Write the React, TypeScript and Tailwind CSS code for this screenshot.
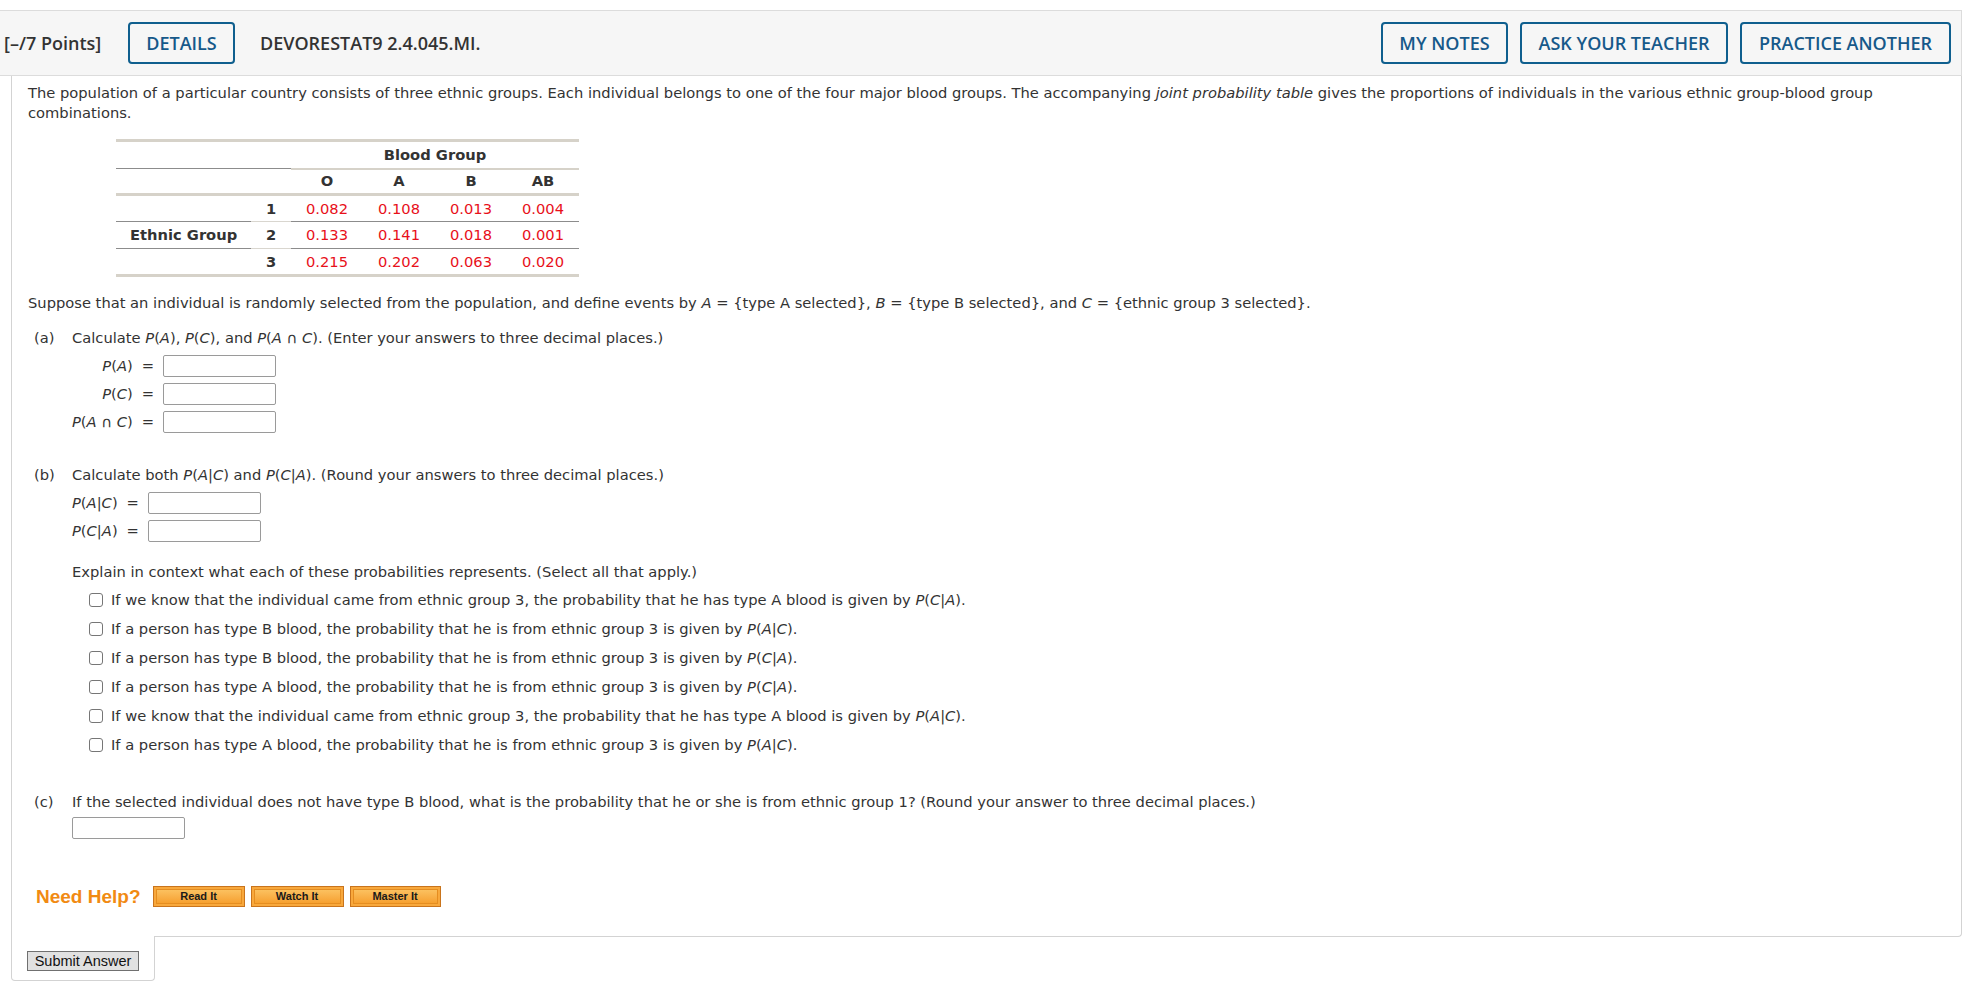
const body = { fontFamily: '"DejaVu Sans", Verdana, sans-serif' }
const head = { fontFamily: '"Open Sans", Arial, sans-serif' }
const arial = { fontFamily: '"Liberation Sans", Arial, sans-serif' }

const rows = [
  ['1', '0.082', '0.108', '0.013', '0.004'],
  ['2', '0.133', '0.141', '0.018', '0.001'],
  ['3', '0.215', '0.202', '0.063', '0.020'],
]

const choices = [
  ['If we know that the individual came from ethnic group 3, the probability that he has type A blood is given by ', 'C', 'A'],
  ['If a person has type B blood, the probability that he is from ethnic group 3 is given by ', 'A', 'C'],
  ['If a person has type B blood, the probability that he is from ethnic group 3 is given by ', 'C', 'A'],
  ['If a person has type A blood, the probability that he is from ethnic group 3 is given by ', 'C', 'A'],
  ['If we know that the individual came from ethnic group 3, the probability that he has type A blood is given by ', 'A', 'C'],
  ['If a person has type A blood, the probability that he is from ethnic group 3 is given by ', 'A', 'C'],
]

const Cond = ({ a, b }: { a: string; b: string }) => (
  <span>
    <i>P</i>(<i>{a}</i>|<i>{b}</i>)
  </span>
)

const Box = ({ w = 'w-[113px]' }: { w?: string }) => (
  <span className={`inline-block ${w} h-[22px] border border-[#9a9a9a] rounded-[2px] bg-white align-middle`} />
)

const HeadBtn = ({ label, w }: { label: string; w: string }) => (
  <div
    className={`${w} h-[42px] flex items-center justify-center border-2 border-[#0f5f8e] rounded-[4px] text-[18px] font-semibold text-[#16598a]`}
  >
    {label}
  </div>
)

const HelpBtn = ({ label, w }: { label: string; w: string }) => (
  <div
    className={`${w} h-[21px] border border-[#c9741c] bg-[#f8a83c] p-[2px]`}
    style={arial}
  >
    <div className="h-full border border-[#e58d20] bg-gradient-to-b from-[#fbc15f] to-[#f6a02e] flex items-center justify-center text-[11px] font-bold text-[#1a1a1a] leading-none">
      {label}
    </div>
  </div>
)

export default function App() {
  return (
    <div className="bg-white w-[1971px] min-h-[987px] text-[#333]" style={body}>
      <div className="h-[10px]" />
      {/* header bar */}
      <div
        className="w-[1962px] h-[66px] bg-[#f6f6f6] border-t border-b border-r border-[#dcdcdc] flex items-center pl-[4px] pr-[10px]"
        style={head}
      >
        <div className="text-[18px] font-semibold text-[#333] w-[124px]">[–/7 Points]</div>
        <HeadBtn label="DETAILS" w="w-[107px]" />
        <div className="ml-[25px] text-[18px] font-semibold text-[#333]">DEVORESTAT9 2.4.045.MI.</div>
        <div className="ml-auto flex gap-[12px]">
          <HeadBtn label="MY NOTES" w="w-[127px]" />
          <HeadBtn label="ASK YOUR TEACHER" w="w-[208px]" />
          <HeadBtn label="PRACTICE ANOTHER" w="w-[211px]" />
        </div>
      </div>

      {/* question body */}
      <div className="ml-[11px] w-[1951px]">
        <div className="border-l border-r border-b border-[#d3d3d3] rounded-br-[4px] pl-[16px] pr-[40px] pt-[7px] pb-[29px] text-[14.7px] leading-[20px]">
          <p>
            The population of a particular country consists of three ethnic groups. Each individual belongs to one of
            the four major blood groups. The accompanying <i>joint probability table</i> gives the proportions of
            individuals in the various ethnic group-blood group combinations.
          </p>

          <table className="mt-[16px] ml-[88px] border-collapse">
            <tbody>
              <tr className="h-[28px] border-t-[3px] border-[#d6d2c9]">
                <td colSpan={2} className="w-[175px] border-b border-[#8c8c8c]" />
                <td colSpan={4} className="text-center font-bold border-b-2 border-[#d6d2c9]">
                  Blood Group
                </td>
              </tr>
              <tr className="h-[26px] border-b-[3px] border-[#d6d2c9] font-bold">
                <td colSpan={2} />
                <td className="w-[72px] text-center">O</td>
                <td className="w-[72px] text-center">A</td>
                <td className="w-[72px] text-center">B</td>
                <td className="w-[72px] text-center">AB</td>
              </tr>
              {rows.map((r, i) => (
                <tr key={i} className={`h-[27px] ${i < 2 ? 'border-b border-[#8c8c8c]' : 'border-b-[3px] border-[#d6d2c9]'}`}>
                  <td className="w-[135px] pl-[14px] font-bold">{i === 1 ? 'Ethnic Group' : ''}</td>
                  <td className={`w-[40px] text-center font-bold ${i < 2 ? 'border-b border-[#d9d6cf]' : ''}`}>{r[0]}</td>
                  {r.slice(1).map((v, j) => (
                    <td key={j} className="text-center text-[#e8101a]">
                      {v}
                    </td>
                  ))}
                </tr>
              ))}
            </tbody>
          </table>

          <p className="mt-[16px]">
            Suppose that an individual is randomly selected from the population, and define events by <i>A</i> = {'{'}type A
            selected{'}'}, <i>B</i> = {'{'}type B selected{'}'}, and <i>C</i> = {'{'}ethnic group 3 selected{'}'}.
          </p>

          {/* part a */}
          <div className="mt-[15px] pl-[6px] flex">
            <div className="w-[38px]">(a)</div>
            <div>
              <div>
                Calculate <i>P</i>(<i>A</i>), <i>P</i>(<i>C</i>), and <i>P</i>(<i>A</i> ∩ <i>C</i>). (Enter your answers
                to three decimal places.)
              </div>
              <div className="mt-[7px] grid grid-cols-[auto_auto_auto] justify-start gap-y-[6px] items-center">
                <div className="text-right">
                  <i>P</i>(<i>A</i>)
                </div>
                <div className="px-[9px]">=</div>
                <Box />
                <div className="text-right">
                  <i>P</i>(<i>C</i>)
                </div>
                <div className="px-[9px]">=</div>
                <Box />
                <div className="text-right">
                  <i>P</i>(<i>A</i> ∩ <i>C</i>)
                </div>
                <div className="px-[9px]">=</div>
                <Box />
              </div>
            </div>
          </div>

          {/* part b */}
          <div className="mt-[32px] pl-[6px] flex">
            <div className="w-[38px]">(b)</div>
            <div>
              <div>
                Calculate both <Cond a="A" b="C" /> and <Cond a="C" b="A" />. (Round your answers to three decimal
                places.)
              </div>
              <div className="mt-[7px] grid grid-cols-[auto_auto_auto] justify-start gap-y-[6px] items-center">
                <div>
                  <Cond a="A" b="C" />
                </div>
                <div className="px-[9px]">=</div>
                <Box />
                <div>
                  <Cond a="C" b="A" />
                </div>
                <div className="px-[9px]">=</div>
                <Box />
              </div>
              <div className="mt-[20px]">
                Explain in context what each of these probabilities represents. (Select all that apply.)
              </div>
              <div className="mt-[8px] ml-[17px] flex flex-col gap-[9px]">
                {choices.map((c, i) => (
                  <label key={i} className="flex items-center gap-[8px]">
                    <span className="inline-block w-[14px] h-[14px] border border-[#767676] rounded-[3px] bg-white" />
                    <span>
                      {c[0]}
                      <Cond a={c[1]} b={c[2]} />.
                    </span>
                  </label>
                ))}
              </div>
            </div>
          </div>

          {/* part c */}
          <div className="mt-[37px] pl-[6px] flex">
            <div className="w-[38px]">(c)</div>
            <div>
              <div>
                If the selected individual does not have type B blood, what is the probability that he or she is from
                ethnic group 1? (Round your answer to three decimal places.)
              </div>
              <div className="mt-[5px]">
                <Box />
              </div>
            </div>
          </div>

          {/* help */}
          <div className="mt-[47px] ml-[8px] flex items-center gap-[6px]">
            <span className="text-[19px] font-bold text-[#f18a12] mr-[6px]" style={arial}>
              Need Help?
            </span>
            <HelpBtn label="Read It" w="w-[92px]" />
            <HelpBtn label="Watch It" w="w-[93px]" />
            <HelpBtn label="Master It" w="w-[91px]" />
          </div>
        </div>

        {/* submit tab */}
        <div className="-mt-px w-[144px] h-[45px] bg-white border-l border-r border-b border-[#d3d3d3] rounded-b-[4px] pl-[15px] pt-[13px]">
          <button
            className="w-[112px] h-[20px] border border-[#707070] bg-[#e1e1e1] text-[14.5px] text-[#111] leading-none"
            style={arial}
          >
            Submit Answer
          </button>
        </div>
      </div>
    </div>
  )
}
